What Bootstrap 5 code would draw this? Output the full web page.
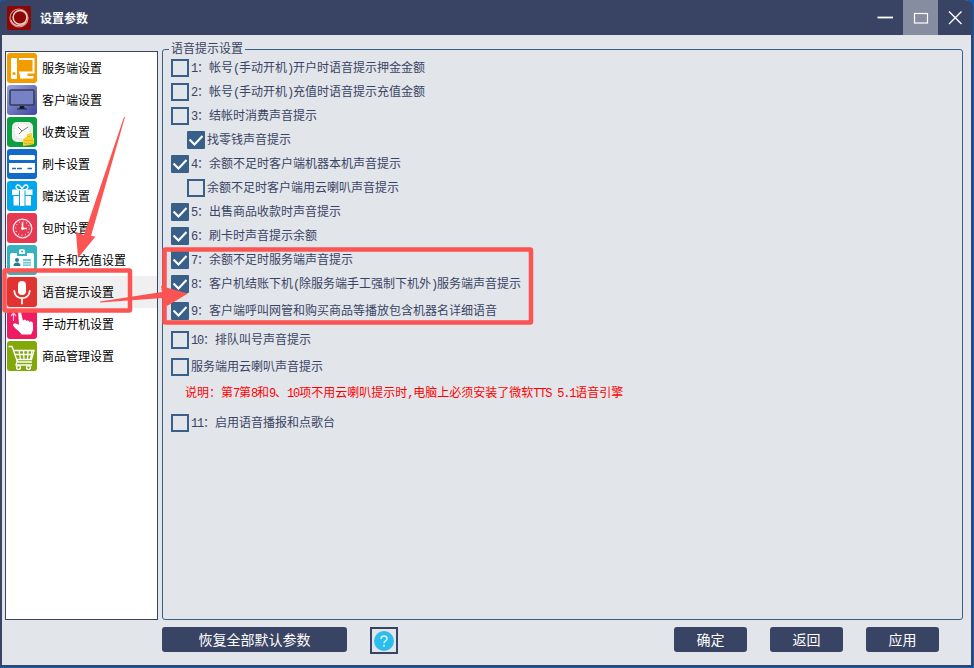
<!DOCTYPE html>
<html lang="zh-CN">
<head>
<meta charset="utf-8">
<title>设置参数</title>
<link rel="stylesheet" href="https://cdn.jsdelivr.net/npm/bootstrap@5.3.0/dist/css/bootstrap.min.css">
<style>
body{width:974px;height:668px;overflow:hidden;background:#0a5fc0;font:12px/1 "Liberation Sans","Noto Sans CJK SC",sans-serif;color:#394464}
.win{width:973px;height:667px;background:#e2e5ea;border:solid #394464;border-width:0 2px 2px;border-radius:5px 8px 0 0}
.titlebar{height:35px;background:#394464;color:#fff;margin:0 -2px;padding-left:7px;border-radius:5px 8px 0 0}
.titlebar h1{font-size:12px;font-weight:700;line-height:16px;padding-top:2px;margin-left:9px}
.ctl{width:35px;height:35px}
.ctl.max{background:#868da1}
.side{width:153px;height:569px;margin:16px 0 0 3px;border:1px solid #394464;background:#fff;color:#000}
.side .list-group-item{height:32px;padding:0 0 0 1px;border:0;color:#000;background:#fff;border-radius:0;white-space:nowrap}
.side .list-group-item span{line-height:16px;padding-top:2px}
.side .list-group-item.sel{background:#f0f0f0}
.side svg{width:30px;height:30px;margin-right:5px;flex:none;border-radius:3px}
.group{width:801px;height:571px;margin:14px 0 0 4px;border:1px solid #396088;border-radius:3px;padding:6px 0 0 8px}
.group-title{width:76px;height:14px;line-height:14px;margin:-14px 0 0 -2px;padding:0 2px;background:#e2e5ea;white-space:nowrap}
.opt{height:24px;line-height:16px;white-space:nowrap}
.opt.sub{padding-left:16px}
.opt .form-check-input{width:18px;height:18px;margin:0 2px 0 0;border:2px solid #396088;border-radius:0;background-color:transparent;flex:none}
.opt .form-check-input:checked{background-color:#396088;border-radius:1px;background-size:18px;background-origin:border-box;background-image:url("data:image/svg+xml,%3Csvg xmlns='http://www.w3.org/2000/svg' viewBox='0 0 18 18'%3E%3Cpath d='M2.500 8.500l5 5 8-8.500' fill='none' stroke='%23fff' stroke-width='2.100'/%3E%3C/svg%3E")}
.h30{height:30px}.h28{height:28px}.h26{height:26px}.h34{height:34px}
.warn{color:#f00;padding-left:14px}
i.a{font:12px/12px "Liberation Mono",monospace;letter-spacing:-1.2px}
.cmd{background:#394464;color:#fff;border:0;border-radius:3px;font-size:14px;line-height:25px;height:25px;width:73px;padding:1px 0 0}
.cmd:hover{background:#394464;color:#fff}
.cmd.wide{width:185px}
.cmds{gap:23px}
.helpbtn{width:28px;height:27px;border:2px solid #394464;background:#e2e5ea;margin-left:23px}
.foot{padding:7px 32px 0 160px}
.notes{position:absolute;left:0;top:0;pointer-events:none}
</style>
</head>
<body>
<div class="win d-flex flex-column">
  <header class="titlebar d-flex align-items-center">
    <svg width="24" height="24" viewBox="0 0 24 24"><rect width="24" height="24" rx="2" fill="#8d0804"/><circle cx="12" cy="12" r="9" fill="none" stroke="#d8938e" stroke-width="1.200"/><circle cx="13" cy="11.300" r="6.900" fill="none" stroke="#f0d0cc" stroke-width="1.500"/><path d="M4 14c2 6 10 8 15 2" fill="none" stroke="#e8bbb7" stroke-width="1.200"/></svg>
    <h1 class="mb-0 me-auto">设置参数</h1>
    <svg class="ctl" viewBox="0 0 35 35"><path d="M9.500 17.500h15.500" stroke="#fff" stroke-width="1.800"/></svg>
    <svg class="ctl max" viewBox="0 0 35 35"><rect x="11.500" y="13.500" width="13" height="9.500" fill="none" stroke="#fff" stroke-width="1.200"/></svg>
    <svg class="ctl" viewBox="0 0 35 35"><path d="M11 11.500l12.500 12.500M23.500 11.500L11 24" stroke="#fff" stroke-width="1.400"/></svg>
  </header>

  <main class="d-flex">
    <nav class="side list-group rounded-0">
      <div class="list-group-item d-flex align-items-center"><svg viewBox="0 0 30 30"><rect width="30" height="30" fill="#f29c00"/><rect x="4" y="5" width="6" height="21" rx="1" fill="#fff"/><circle cx="7" cy="20.500" r="1.600" fill="#f29c00"/><path d="M12 6h14.500v13.500H12" fill="none" stroke="#fff" stroke-width="2"/><path d="M12.500 20h8v3h6v2.500H13v-2.500z" fill="#fff"/></svg><span>服务端设置</span></div>
      <div class="list-group-item d-flex align-items-center"><svg viewBox="0 0 30 30"><defs><linearGradient id="pc" x2="1" y2="1"><stop stop-color="#9aa5dd"/><stop offset="1" stop-color="#3f469f"/></linearGradient></defs><rect width="30" height="30" fill="url(#pc)"/><rect x="3" y="5" width="24" height="15" rx="1" fill="#7681c6" stroke="#353c55" stroke-width="1.500"/><path d="M13 21h4l1 3H12z" fill="#151a26"/><path d="M10 24h10" stroke="#252b3c"/></svg><span>客户端设置</span></div>
      <div class="list-group-item d-flex align-items-center"><svg viewBox="0 0 30 30"><rect width="30" height="30" fill="#0b9f42"/><rect x="5" y="5" width="21" height="20" rx="5" fill="#eef0ec"/><circle cx="15" cy="14" r="8" fill="#fafafa" stroke="#c9cfca" stroke-width="1" stroke-dasharray="1 2"/><path d="M11 10l4 4 6-4M15 14l-3 3" fill="none" stroke="#555" stroke-width=".8"/><path d="M16 22l2-1v-1h2v-3l5-1v4l2 1v6l-4 1-7 1z" fill="#f6d331"/><path d="M17 23l4 1 5-1M17 26l4 1 5-1M20 19l3 1" fill="none" stroke="#d9a818" stroke-width=".7"/></svg><span>收费设置</span></div>
      <div class="list-group-item d-flex align-items-center"><svg viewBox="0 0 30 30"><rect width="30" height="30" fill="#126bc8"/><rect x="2" y="6" width="26" height="5" rx="1.500" fill="#fff"/><path d="M2 14h26v8.500q0 1.500-1.500 1.500h-23Q2 24 2 22.500z" fill="#fff"/><path d="M5 19.500h4m1 0h5m5.500 0H25" stroke="#126bc8" stroke-width="1.500"/></svg><span>刷卡设置</span></div>
      <div class="list-group-item d-flex align-items-center"><svg viewBox="0 0 30 30"><rect width="30" height="30" fill="#00a6ee"/><path d="M5 8.500h7V14H5zM13 8.500h4.500V25H13zM18.500 8.500h7V14h-7zM6.500 15H12v9.500H6.500zM18.500 15H24v9.500h-5.500z" fill="#fff"/><path d="M14 9C8 9 8 4 11 4c2 0 3 2 4 4 1-2 2-4 4-4 3 0 3 5-3 5" fill="none" stroke="#fff" stroke-width="1.300"/></svg><span>赠送设置</span></div>
      <div class="list-group-item d-flex align-items-center"><svg viewBox="0 0 30 30"><rect width="30" height="30" fill="#e73952"/><circle cx="15.500" cy="15.500" r="9.300" fill="none" stroke="#ffe5e8" stroke-width="1.300"/><circle cx="15.500" cy="15.500" r="6.800" fill="none" stroke="#ffe5e8" stroke-width="1.300" stroke-dasharray=".8 2.760"/><path d="M15.500 9.500v6h4.500" fill="none" stroke="#fff" stroke-width="1.600"/><circle cx="15.500" cy="15.500" r="1.400" fill="#fff"/></svg><span>包时设置</span></div>
      <div class="list-group-item d-flex align-items-center"><svg viewBox="0 0 30 30"><rect width="30" height="30" fill="#36b2c1"/><path d="M3 10q0-2 2-2h5v3h10V8h5q2 0 2 2v14H3z" fill="#fff"/><path d="M12 9V6q0-2 3-2t3 2v3z" fill="#fff"/><circle cx="15" cy="6.500" r="1" fill="#36b2c1"/><circle cx="10" cy="15" r="2" fill="#257a9a"/><path d="M6.500 21q0-3.500 3.500-3.500t3.500 3.500z" fill="#257a9a"/><path d="M16 14h8v7h-8z" fill="#7bcbd4"/><path d="M16 16.500h8m-8 2.500h8" stroke="#fff" stroke-width=".7"/></svg><span>开卡和充值设置</span></div>
      <div class="list-group-item sel d-flex align-items-center"><svg viewBox="0 0 30 30"><rect width="30" height="30" fill="#e13431"/><rect x="11" y="4" width="8" height="14" rx="4" fill="#fff"/><path d="M7.300 14c0 9.500 15.400 9.500 15.400 0M15 21.500V26.500" fill="none" stroke="#fff" stroke-width="1.800" stroke-linecap="round"/></svg><span>语音提示设置</span></div>
      <div class="list-group-item d-flex align-items-center"><svg viewBox="0 0 30 30"><rect width="30" height="30" fill="#ed1c63"/><path d="M11 2q2.500-1 3 1l2 9c1-2 3-1 3.500 0 1.500-1 2.500 0 3 1 2-1 3.500 0 3.500 2v6l-2 4.500H14.500c-2-4-7-5.500-8.500-9.500 0-2 3-2 6 0z" fill="#fff"/><path d="M6.500 12V5M4 7l2.500-3L9 7" fill="none" stroke="#ffc0d4" stroke-width="1.200"/></svg><span>手动开机设置</span></div>
      <div class="list-group-item d-flex align-items-center"><svg viewBox="0 0 30 30"><rect width="30" height="30" fill="#83a80b"/><path d="M1.500 5.500H5l5 14q.5 1.500 2 1.500h13M6.500 9.500h20.500l-2.500 9H9.500M8 13.500h18M12 9.500l1.500 9m3-9l.5 9m4-9l-.5 9m4.500-9l-1.500 9M10 20l-1 4h16" fill="none" stroke="#fff" stroke-width="1.300"/><circle cx="11.500" cy="26.500" r="1.900" fill="#83a80b" stroke="#fff" stroke-width="1.400"/><circle cx="21.500" cy="26.500" r="1.900" fill="#83a80b" stroke="#fff" stroke-width="1.400"/></svg><span>商品管理设置</span></div>
    </nav>

    <section class="group">
      <div class="group-title">语音提示设置</div>
      <label class="opt d-flex align-items-center"><input class="form-check-input" type="checkbox"><span><i class="a">1</i>：帐号<i class="a">(</i>手动开机<i class="a">)</i>开户时语音提示押金金额</span></label>
      <label class="opt d-flex align-items-center"><input class="form-check-input" type="checkbox"><span><i class="a">2</i>：帐号<i class="a">(</i>手动开机<i class="a">)</i>充值时语音提示充值金额</span></label>
      <label class="opt d-flex align-items-center"><input class="form-check-input" type="checkbox"><span><i class="a">3</i>：结帐时消费声音提示</span></label>
      <label class="opt sub d-flex align-items-center"><input class="form-check-input" type="checkbox" checked><span>找零钱声音提示</span></label>
      <label class="opt d-flex align-items-center"><input class="form-check-input" type="checkbox" checked><span><i class="a">4</i>：余额不足时客户端机器本机声音提示</span></label>
      <label class="opt sub d-flex align-items-center"><input class="form-check-input" type="checkbox"><span>余额不足时客户端用云喇叭声音提示</span></label>
      <label class="opt d-flex align-items-center"><input class="form-check-input" type="checkbox" checked><span><i class="a">5</i>：出售商品收款时声音提示</span></label>
      <label class="opt d-flex align-items-center"><input class="form-check-input" type="checkbox" checked><span><i class="a">6</i>：刷卡时声音提示余额</span></label>
      <label class="opt d-flex align-items-center"><input class="form-check-input" type="checkbox" checked><span><i class="a">7</i>：余额不足时服务端声音提示</span></label>
      <label class="opt d-flex align-items-center"><input class="form-check-input" type="checkbox" checked><span><i class="a">8</i>：客户机结账下机<i class="a">(</i>除服务端手工强制下机外<i class="a">)</i>服务端声音提示</span></label>
      <label class="opt h30 d-flex align-items-center"><input class="form-check-input" type="checkbox" checked><span><i class="a">9</i>：客户端呼叫网管和购买商品等播放包含机器名详细语音</span></label>
      <label class="opt h28 d-flex align-items-center"><input class="form-check-input" type="checkbox"><span><i class="a">10</i>：排队叫号声音提示</span></label>
      <label class="opt h26 d-flex align-items-center"><input class="form-check-input" type="checkbox"><span>服务端用云喇叭声音提示</span></label>
      <div class="opt h26 warn d-flex align-items-center"><span>说明：第<i class="a">7</i>第<i class="a">8</i>和<i class="a">9</i>、<i class="a">10</i>项不用云喇叭提示时<i class="a">,</i>电脑上必须安装了微软<i class="a">TTS 5.1</i>语音引擎</span></div>
      <label class="opt h34 d-flex align-items-center"><input class="form-check-input" type="checkbox"><span><i class="a">11</i>：启用语音播报和点歌台</span></label>
    </section>
  </main>

  <footer class="foot d-flex">
    <button class="btn cmd wide">恢复全部默认参数</button>
    <div class="helpbtn d-flex align-items-center justify-content-center me-auto"><svg width="20" height="20" viewBox="0 0 20 20"><circle cx="10" cy="10" r="10" fill="#2bbdee"/><path d="M7 8q0-3 3-3t3 2.700q0 1.300-1.500 2.200T10 12.300" fill="none" stroke="#d8f3fc" stroke-width="1.500"/><circle cx="10" cy="14.700" r="1" fill="#d8f3fc"/></svg></div>
    <div class="d-flex cmds"><button class="btn cmd">确定</button><button class="btn cmd">返回</button><button class="btn cmd">应用</button></div>
  </footer>
</div>

<svg class="notes" width="974" height="668" viewBox="0 0 974 668">
  <g fill="none" stroke="#fc5452" stroke-width="4.500"><rect x="4.500" y="270.500" width="125.500" height="40" rx="1"/><rect x="164.500" y="249.500" width="366.500" height="73" rx="1"/></g>
  <g fill="#fc5452"><path d="M124 117h1L91 236l4.500.5L78 258l-2-26 8 3z"/><path d="M100 301.500l62-9.500-1-6 27 7.500-21 12.500-4-8-63 4.500z"/></g>
</svg>
<script src="https://cdn.jsdelivr.net/npm/bootstrap@5.3.0/dist/js/bootstrap.bundle.min.js"></script>
</body>
</html>
